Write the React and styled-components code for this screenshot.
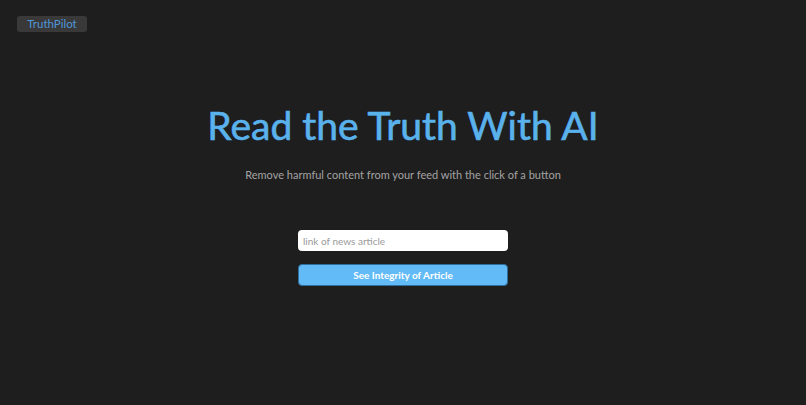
import React from "react";
import styled, { createGlobalStyle } from "styled-components";

const GlobalStyle = createGlobalStyle`
  html, body {
    margin: 0;
    padding: 0;
    background: #1f1e1e;
    font-family: "Lato", "Noto Sans", sans-serif;
  }
  * { box-sizing: border-box; }
`;

export default function App() {
  return (
    <Page>
      <GlobalStyle />
      <TopBar>
        <Logo>TruthPilot</Logo>
      </TopBar>
      <Hero>
        <Title>Read the Truth With AI</Title>
        <Subtitle>Remove harmful content from your feed with the click of a button</Subtitle>
        <Form onSubmit={(e) => e.preventDefault()}>
          <Input placeholder="link of news article" />
          <Button type="submit">See Integrity of Article</Button>
        </Form>
      </Hero>
    </Page>
  );
}

const Page = styled.div`
  width: 100%;
  height: 405px;
  background: #1f1e1e;
  overflow: hidden;
`;
const TopBar = styled.header`
  display: flex;
  padding: 16px 17px 0;
`;
const Logo = styled.div`
  width: 70px;
  height: 16px;
  border-radius: 3px;
  background: #3a3939;
  color: #4f97d8;
  font-size: 11.5px;
  line-height: 16px;
  text-align: center;
`;
const Hero = styled.main`
  display: flex;
  flex-direction: column;
  align-items: center;
  padding-top: 68px;
`;
const Title = styled.h1`
  margin: 0;
  color: #5ab2ec;
  font-size: 39px;
  font-weight: 400;
  line-height: 50px;
  -webkit-text-stroke: 0.6px #5ab2ec;
`;
const Subtitle = styled.p`
  margin: 17px 0 0;
  color: #a3a3a3;
  font-size: 11px;
  line-height: 15px;
`;
const Form = styled.form`
  display: flex;
  flex-direction: column;
  gap: 13px;
  width: 210px;
  margin-top: 48px;
`;
const Input = styled.input`
  height: 21px;
  border: none;
  border-radius: 4px;
  background: #fff;
  padding: 0 5px;
  font-family: inherit;
  font-size: 10px;
  outline: none;
  &::placeholder { color: #9a9a9a; }
`;
const Button = styled.button`
  height: 22px;
  border: 1px solid #2f6f9f;
  border-radius: 4px;
  background: #62baf6;
  color: #fff;
  font-family: inherit;
  font-size: 10px;
  font-weight: 700;
  cursor: pointer;
`;
